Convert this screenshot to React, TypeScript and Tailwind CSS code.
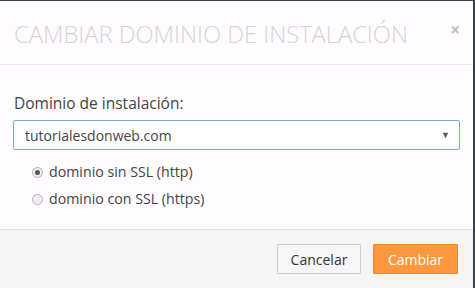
import React from "react";

export default function App() {
  return (
    <div className="w-[475px] h-[288px] bg-[#3a4047] pt-px pr-[2px] overflow-hidden" style={{ fontFamily: '"Open Sans", sans-serif' }}>
      <div className="w-[473px] h-[287px] bg-[#fefcfe] flex flex-col">
        <div className="h-[64px] flex items-start justify-between border-b border-[#e9e6e9] pl-[14px] pr-[13px]">
          <h1 className="mt-[16px] text-[23.7px] leading-[34px] font-light text-[#d6d3d6]">CAMBIAR DOMINIO DE INSTALACIÓN</h1>
          <span className="mt-[18px] text-[17px] leading-[22px] font-bold text-[#c0bdc0]">×</span>
        </div>
        <div className="flex-1 px-[13px] pt-[28px]">
          <div className="text-[15.5px] leading-[21px] text-[#444] pl-px">Dominio de instalación:</div>
          <div className="mt-[6px] h-[30px] border border-[#7aa7e0] rounded-[2px] flex items-center justify-between pl-[11px] pr-[9px] bg-white">
            <span className="text-[14px] text-[#444]">tutorialesdonweb.com</span>
            <span className="text-[9px] text-[#555]">▼</span>
          </div>
          <div className="mt-[11px] pl-[19px] flex flex-col gap-[5px]">
            <label className="flex items-center gap-[6px] text-[14.2px] leading-[22px] text-[#444]">
              <span className="w-[11px] h-[11px] rounded-full border border-[#b5b2b5] bg-[#efedef] flex items-center justify-center">
                <span className="w-[5px] h-[5px] rounded-full bg-[#555]" />
              </span>
              dominio sin SSL (http)
            </label>
            <label className="flex items-center gap-[6px] text-[14.2px] leading-[22px] text-[#444]">
              <span className="w-[11px] h-[11px] rounded-full border border-[#b5b2b5] bg-[#efedef]" />
              dominio con SSL (https)
            </label>
          </div>
        </div>
        <div className="h-[59px] bg-[#f6f5f6] border-t border-[#e2dfe2] flex items-start justify-end gap-[12px] pt-[14px] pr-[15px]">
          <button className="w-[84px] h-[30px] border border-[#cfcccf] bg-[#f7f5f7] text-[14px] text-[#333] rounded-[1px]">Cancelar</button>
          <button className="w-[85px] h-[30px] border border-[#f0882e] bg-[#fd9840] text-[14px] text-white rounded-[1px]">Cambiar</button>
        </div>
      </div>
    </div>
  );
}
